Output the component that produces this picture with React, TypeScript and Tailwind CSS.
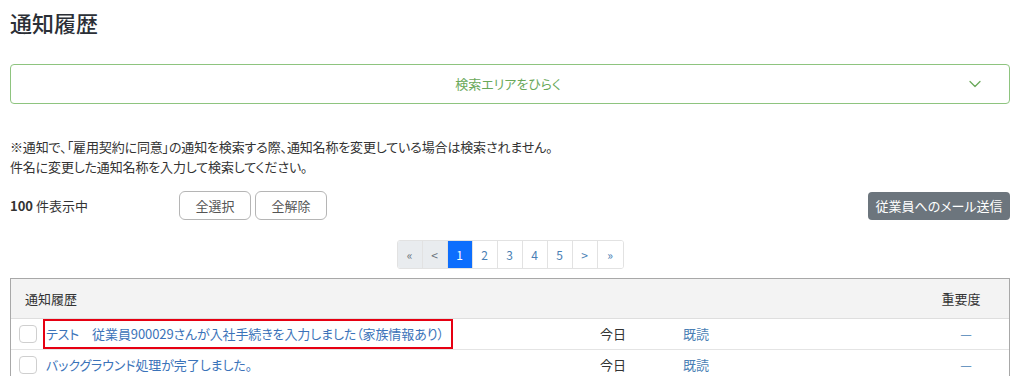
import { ChevronDown } from "lucide-react";

const font = "font-['Noto_Sans_CJK_JP','Noto_Sans',sans-serif] [font-feature-settings:'palt']";

type Row = { title: string; date: string; status: string; marked?: boolean };

const rows: Row[] = [
  { title: "テスト　従業員900029さんが入社手続きを入力しました（家族情報あり）", date: "今日", status: "既読", marked: true },
  { title: "バックグラウンド処理が完了しました。", date: "今日", status: "既読" },
];

const pages = ["«", "<", "1", "2", "3", "4", "5", ">", "»"];

export default function App() {
  return (
    <div className={`${font} min-h-screen bg-white text-[#333]`}>
      <div className="w-[1000px] ml-[10px]">
        {/* Title */}
        <h1 className="pt-[6px] text-[22px] leading-[32px] font-medium text-[#2b2f36]">通知履歴</h1>

        {/* Search toggle */}
        <button className="mt-[26px] flex h-[40px] w-full items-center rounded-[4px] border border-[#8ec47f] bg-white">
          <span className="flex-1 pl-[40px] text-center text-[13px] text-[#6aa95a]">検索エリアをひらく</span>
          <ChevronDown className="mr-[24px] h-[20px] w-[20px] text-[#6aa95a]" strokeWidth={1.5} />
        </button>

        {/* Note */}
        <p className="mt-[33px] text-[13px] leading-[20px] tracking-[-0.15px] text-[#333]">
          ※通知で､「雇用契約に同意」の通知を検索する際、通知名称を変更している場合は検索されません。
          <br />
          件名に変更した通知名称を入力して検索してください。
        </p>

        {/* Count + actions */}
        <div className="mt-[14px] flex h-[29px] items-center">
          <span className="w-[169px] text-[13px]">
            <span className="font-bold">100</span> 件表示中
          </span>
          <div className="flex gap-[4px]">
            <button className="h-[29px] w-[72px] rounded-[6px] border border-[#b5b5b5] bg-white text-[13px] text-[#555]">全選択</button>
            <button className="h-[29px] w-[72px] rounded-[6px] border border-[#b5b5b5] bg-white text-[13px] text-[#555]">全解除</button>
          </div>
          <button className="ml-auto h-[28px] w-[142px] rounded-[4px] bg-[#6c757d] text-[13px] text-white">従業員へのメール送信</button>
        </div>

        {/* Pagination */}
        <div className="mt-[20px] flex justify-center">
          <div className="flex h-[29px] overflow-hidden rounded-[3px] border border-[#e2e2e2]">
            {pages.map((p, i) => (
              <span
                key={i}
                className={
                  "flex w-[25px] items-center justify-center border-r border-[#e2e2e2] text-[12px] last:border-r-0 " +
                  (i < 2
                    ? "bg-[#e9ecef] text-[#6c757d]"
                    : p === "1"
                    ? "bg-[#0d6efd] text-white"
                    : "bg-white text-[#4a7fb5]")
                }
              >
                {p}
              </span>
            ))}
          </div>
        </div>

        {/* Table */}
        <div className="mt-[9px] border border-[#a8a8a8]">
          <div className="flex h-[40px] items-center border-b border-[#dedede] bg-[#f3f3f3] text-[13px]">
            <span className="flex-1 pl-[14px]">通知履歴</span>
            <span className="mr-[8px] w-[80px] text-center">重要度</span>
          </div>
          {rows.map((r, i) => (
            <div key={i} className="flex h-[31px] items-center border-b border-[#e4e4e4] text-[13px]">
              <span className="ml-[8px] h-[18px] w-[18px] shrink-0 rounded-[4px] border border-[#cfcfcf] bg-white" />
              <div className="ml-[6px] w-[557px] shrink-0">
                <span
                  className={
                    "inline-block py-[3px] pl-[1px] pr-[7px] tracking-[-0.1px] text-[#3b73b9] " +
                    (r.marked ? "border-2 border-[#e60012]" : "border-2 border-transparent")
                  }
                >
                  {r.title}
                </span>
              </div>
              <span className="w-[83px] shrink-0">{r.date}</span>
              <span className="flex-1 text-[#4a7fb5]">{r.status}</span>
              <span className="mr-[3px] w-[80px] shrink-0 text-center text-[#4a7fb5]">—</span>
            </div>
          ))}
        </div>
      </div>
    </div>
  );
}
